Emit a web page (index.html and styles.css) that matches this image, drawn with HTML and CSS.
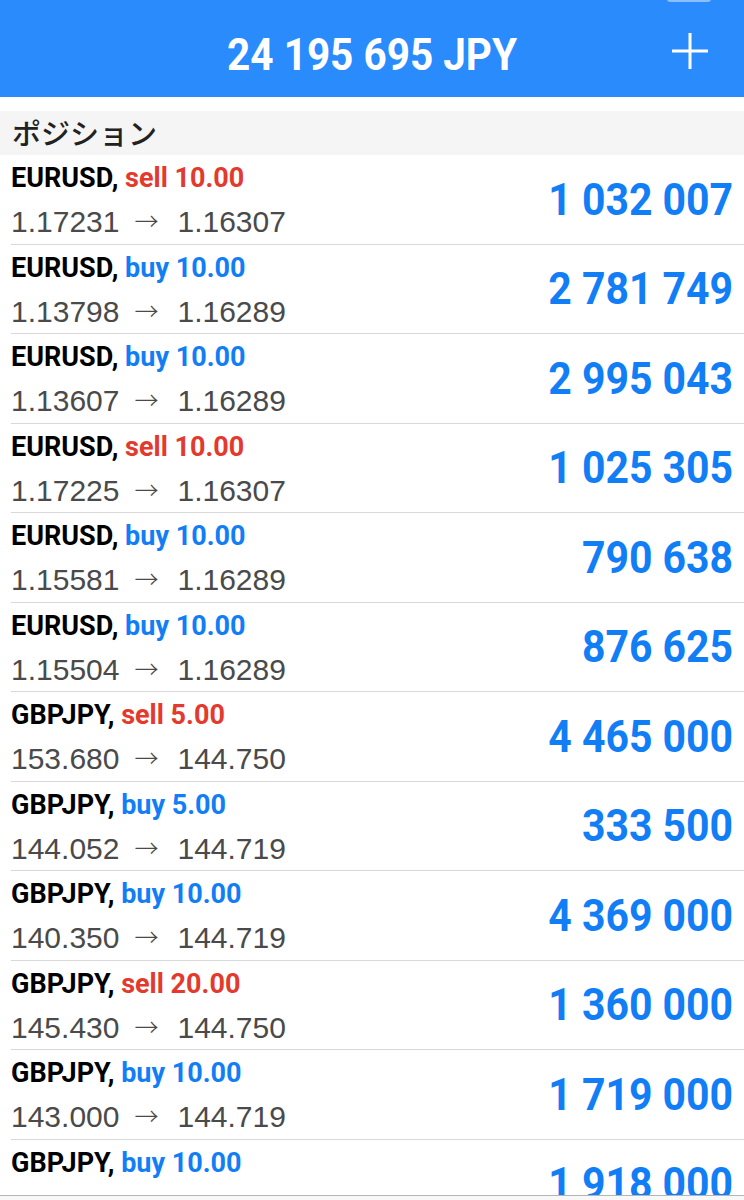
FILE: index.html
```html
<!DOCTYPE html>
<html lang="ja">
<head>
  <meta charset="UTF-8" />
  <meta name="viewport" content="width=device-width, initial-scale=1.0"/>
  <title>取引</title>
  <link rel="stylesheet" href="styles.css">
</head>
<body>
  <div class="screen">
    <header class="topbar">
      <span class="status-pill"></span>
      <h1 class="balance">24 195 695 JPY</h1>
      <button class="add-btn" aria-label="新規注文">
        <svg width="36" height="36" viewBox="0 0 36 36">
          <path d="M18 0 V36 M0 18 H36" stroke="#fff" stroke-width="3" fill="none"/>
        </svg>
      </button>
    </header>

    <div class="scroll">
      <div class="peek"></div>
      <div class="section-title">ポジション</div>
      <ul class="positions" id="positions"></ul>
    </div>

    <nav class="tabbar"></nav>
  </div>

  <script>
    // ポジション一覧
    const positions = [
      ["EURUSD", "sell", "10.00", "1.17231", "1.16307", "1 032 007"],
      ["EURUSD", "buy", "10.00", "1.13798", "1.16289", "2 781 749"],
      ["EURUSD", "buy", "10.00", "1.13607", "1.16289", "2 995 043"],
      ["EURUSD", "sell", "10.00", "1.17225", "1.16307", "1 025 305"],
      ["EURUSD", "buy", "10.00", "1.15581", "1.16289", "790 638"],
      ["EURUSD", "buy", "10.00", "1.15504", "1.16289", "876 625"],
      ["GBPJPY", "sell", "5.00", "153.680", "144.750", "4 465 000"],
      ["GBPJPY", "buy", "5.00", "144.052", "144.719", "333 500"],
      ["GBPJPY", "buy", "10.00", "140.350", "144.719", "4 369 000"],
      ["GBPJPY", "sell", "20.00", "145.430", "144.750", "1 360 000"],
      ["GBPJPY", "buy", "10.00", "143.000", "144.719", "1 719 000"],
      ["GBPJPY", "buy", "10.00", "140.891", "144.719", "1 918 000"]
    ];

    const list = document.getElementById("positions");
    positions.forEach(p => {
      const li = document.createElement("li");
      li.className = "row";
      li.innerHTML = `
        <div class="info">
          <div class="deal"><span class="sym">${p[0]},</span> <span class="side ${p[1]}">${p[1]} ${p[2]}</span></div>
          <div class="prices">${p[3]}<span class="arrow">→</span>${p[4]}</div>
        </div>
        <div class="profit"><span>${p[5]}</span></div>`;
      list.appendChild(li);
    });
  </script>
</body>
</html>
```

FILE: styles.css
```css
body {
  margin: 0;
  padding: 0;
  background: #fff;
  font-family: "Liberation Sans", Arial, sans-serif;
  color: #000;
}

.screen {
  width: 744px;
  height: 1200px;
  overflow: hidden;
  display: flex;
  flex-direction: column;
}

.topbar {
  position: relative;
  flex: none;
  height: 97px;
  box-sizing: border-box;
  padding-top: 11px;
  background: #2a8cfc;
  display: grid;
  grid-template-columns: 1fr auto 1fr;
  align-items: center;
}

.status-pill {
  position: absolute;
  top: -4px;
  left: 667px;
  width: 44px;
  height: 6px;
  border-radius: 3px;
  background: #8cbffb;
}

.balance {
  grid-column: 2;
  margin: 0;
  font-family: Roboto, sans-serif;
  font-weight: 700;
  font-size: 45px;
  line-height: 45px;
  color: #fff;
  white-space: nowrap;
  transform: scaleX(0.9);
}

.add-btn {
  grid-column: 3;
  justify-self: end;
  margin: 0 36px 6px 0;
  padding: 0;
  border: none;
  background: none;
  width: 36px;
  height: 36px;
}

.add-btn svg {
  display: block;
}

.scroll {
  flex: 1;
  overflow: hidden;
}

.peek {
  height: 14px;
}

.section-title {
  height: 44px;
  box-sizing: border-box;
  padding: 3px 12px 0;
  background: #f5f5f5;
  font-family: "Noto Sans CJK JP", sans-serif;
  font-weight: 500;
  font-size: 29px;
  line-height: 36px;
  color: #222;
}

.positions {
  list-style: none;
  margin: 0;
  padding: 0;
}

.row {
  height: 88.5px;
  margin-left: 11px;
  padding-right: 11px;
  border-bottom: 1px solid #d9d9d9;
  display: flex;
  justify-content: space-between;
}

.info {
  padding-top: 5px;
}

.deal {
  font-family: Roboto, sans-serif;
  font-weight: 700;
  font-size: 27px;
  line-height: 36px;
  white-space: nowrap;
}

.side.sell {
  color: #e4392d;
}

.side.buy {
  color: #127ef6;
}

.prices {
  font-size: 30px;
  line-height: 47px;
  color: #4a4a4a;
  white-space: nowrap;
}

.arrow {
  margin: 0 19px 0 15px;
  font-family: "Noto Sans CJK JP", sans-serif;
  font-weight: 300;
  font-size: 24px;
  vertical-align: 2px;
}

.profit {
  align-self: center;
  font-family: Roboto, sans-serif;
  font-weight: 700;
  font-size: 45px;
  line-height: 45px;
  color: #127ef6;
  white-space: nowrap;
}

.profit span {
  display: inline-block;
  transform: scaleX(0.91);
  transform-origin: right center;
}

.tabbar {
  flex: none;
  height: 4px;
  border-top: 1px solid #b5b5b5;
  background: #f8f8f8;
}
```
